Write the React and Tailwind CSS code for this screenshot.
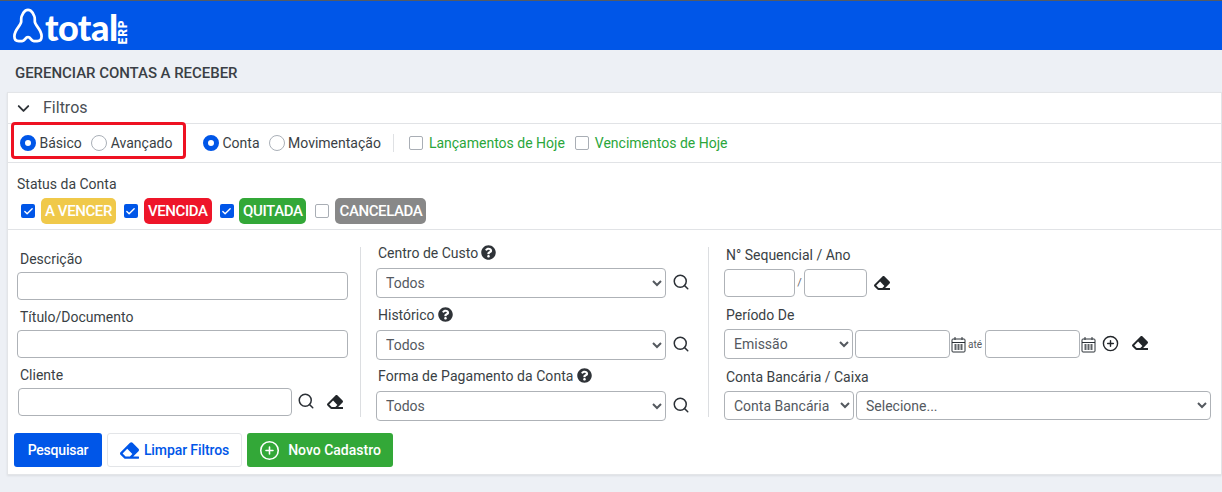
import React from "react";
import { FaEraser, FaQuestionCircle } from "react-icons/fa";
import { Search, CirclePlus, ChevronDown, Check } from "lucide-react";

const Radio = ({ on, label, className = "" }) => (
  <label className={`flex items-center gap-[3.5px] ${className}`}>
    <span className={on ? "w-[16px] h-[16px] rounded-full border-[5px] border-[#0056e8] bg-white" : "w-[16px] h-[16px] rounded-full border border-[#aab0b8] bg-white"} />
    <span className="text-[14px] text-[#3a3f45]">{label}</span>
  </label>
);

const Box = ({ on }) => on ? (
  <span className="w-[14px] h-[14px] rounded-[2px] bg-[#0056e8] flex items-center justify-center">
    <Check size={11} strokeWidth={3} className="text-white" />
  </span>
) : (
  <span className="w-[14px] h-[14px] rounded-[2px] border border-[#a9aeb5] bg-white" />
);

const Badge = ({ color, children }) => (
  <span className={`h-[26px] px-[4px] rounded-[5px] flex items-center text-white text-[15px] font-medium tracking-[-0.4px] ${color}`}>{children}</span>
);

const Label = ({ children, className = "" }) => (
  <div className={`text-[14px] leading-[18px] text-[#3a3f45] flex items-center gap-[3px] ${className}`}>{children}</div>
);

const Help = () => <FaQuestionCircle size={15} className="text-[#2f3338] -mt-[2px]" />;
const Eraser = ({ className = "" }) => <FaEraser size={16} className={`text-[#22262a] ${className}`} />;
const Find = ({ className = "" }) => <Search size={18} strokeWidth={2} className={`text-[#2b3036] -mt-[2px] ${className}`} />;

const inputCls = "h-[28px] bg-white border border-[#aeb2b7] rounded-[4px] outline-none";
const selCls = "bg-white border border-[#aeb2b7] rounded-[4px] text-[14px] text-[#54595f] outline-none pl-[5px]";

const Calendar = () => (
  <svg width="15" height="17" viewBox="0 0 15 17" className="shrink-0 text-[#2b3036]" fill="none" stroke="currentColor">
    <rect x="1" y="3" width="13" height="13" rx="1" />
    <path d="M1 6.5h13M4 1v3M11 1v3" />
    <path d="M3.5 9h2M6.5 9h2M9.5 9h2M3.5 11h2M6.5 11h2M9.5 11h2M3.5 13h2M6.5 13h2M9.5 13h2" strokeWidth="1.3" />
  </svg>
);

const Logo = () => (
  <div className="flex items-center">
    <svg width="32" height="35" viewBox="0 0 32 36" fill="none" stroke="white" strokeWidth="2.8" strokeLinejoin="round">
      <path d="M16 2C14 2 12.500 3.200 11.200 5L9.500 8.500C9 9.500 9 10.500 9 12V14C9 18 2 22 2 29C2 32.500 4 34 6.500 34H10C13 34 13 30 16 30C19 30 19 34 22 34H25.500C28 34 30 32.500 30 29C30 22 23 18 23 14V12C23 10.500 23 9.500 22.500 8.500L20.800 5C19.500 3.200 18 2 16 2Z" />
    </svg>
    <span className="text-white font-black text-[36px] leading-none tracking-[-0.5px] ml-[1px] mt-[2px] font-['Lato',sans-serif]">total</span>
    <span className="text-white font-black text-[12px] leading-none -rotate-90 w-[10px] flex justify-center mt-[12px] tracking-[0.8px]">ERP</span>
  </div>
);

export default function App() {
  return (
    <div className="w-[1222px] h-[492px] overflow-hidden bg-[#edf0f5] font-['Roboto',sans-serif] flex flex-col">
      <div className="h-[50px] shrink-0 bg-[#0056e8] border-t border-[#555b63] pl-[12px] flex items-center">
        <Logo />
      </div>
      <div className="h-[42px] shrink-0 pl-[15px] pt-[14px] text-[15px] leading-[18px] font-medium text-[#3a3f45] tracking-[-0.04px]">GERENCIAR CONTAS A RECEBER</div>

      <div className="ml-[7px] h-[383px] shrink-0 bg-white border border-[#e3e5e8] shadow-[0_1px_2px_rgba(0,0,0,0.08)] flex flex-col">
        <div className="h-[31px] shrink-0 border-b border-[#e1e3e6] pl-[6px] flex items-center gap-[10px]">
          <ChevronDown size={19} strokeWidth={2.4} className="text-[#2f3338]" />
          <span className="text-[16px] text-[#4a4f55]">Filtros</span>
        </div>

        <div className="h-[39px] shrink-0 border-b border-[#e1e3e6] pl-[12px] flex items-center">
          <div className="relative flex items-center gap-[9.5px] w-[183px]">
            <Radio on label="Básico" />
            <Radio label="Avançado" />
            <div className="absolute left-[-9px] top-[-11px] w-[175px] h-[37px] border-[3px] border-[#ee1122] rounded-[4px]" />
          </div>
          <Radio on label="Conta" />
          <Radio label="Movimentação" className="ml-[9px]" />
          <div className="w-px h-[18px] bg-[#dfe1e4] ml-[12px] mr-[15px]" />
          <label className="flex items-center gap-[6px] text-[14px] text-[#2aa63a]"><Box />Lançamentos de Hoje</label>
          <label className="flex items-center gap-[6px] text-[14px] text-[#2aa63a] ml-[10px]"><Box />Vencimentos de Hoje</label>
        </div>

        <div className="h-[67px] shrink-0 border-b border-[#e1e3e6] pl-[9px] pt-[12px]">
          <Label className="pb-[5px]">Status da Conta</Label>
          <div className="flex items-center pl-[4px]">
            <Box on /><span className="w-[6px]" /><Badge color="bg-[#f0c94a]">A VENCER</Badge>
            <span className="w-[8px]" />
            <Box on /><span className="w-[6px]" /><Badge color="bg-[#ee1529]">VENCIDA</Badge>
            <span className="w-[8px]" />
            <Box on /><span className="w-[5.500px]" /><Badge color="bg-[#33a838]">QUITADA</Badge>
            <span className="w-[9px]" />
            <Box /><span className="w-[6px]" /><Badge color="bg-[#888888]">CANCELADA</Badge>
          </div>
        </div>

        <div className="flex pt-[17px] pl-[9px] h-[203px] shrink-0">
          <div className="w-[343px] pr-[12px] shrink-0 flex flex-col">
            <Label className="pl-[3px] pt-[3px] mb-[4px]">Descrição</Label>
            <div className={`${inputCls} w-[331px]`} />
            <Label className="pl-[3px] mt-[8px] mb-[4px]">Título/Documento</Label>
            <div className={`${inputCls} w-[331px]`} />
            <Label className="pl-[3px] mt-[8px] mb-[4px]">Cliente</Label>
            <div className="flex items-center pl-[1px]">
              <div className={`${inputCls} w-[274px]`} />
              <Find className="ml-[5px]" />
              <Eraser className="ml-[12px]" />
            </div>
          </div>

          <div className="w-[348px] shrink-0 border-l border-[#dcdee1] pl-[15px] h-[170px] flex flex-col">
            <Label className="pl-[2px] mt-[-3px] mb-[6px]">Centro de Custo <Help /></Label>
            <div className="flex items-center gap-[6px]">
              <select className={`${selCls} w-[290px] h-[30px]`}><option>Todos</option></select><Find />
            </div>
            <Label className="pl-[2px] mt-[8px] mb-[6px]">Histórico <Help /></Label>
            <div className="flex items-center gap-[6px]">
              <select className={`${selCls} w-[290px] h-[30px]`}><option>Todos</option></select><Find />
            </div>
            <Label className="pl-[2px] mt-[7px] mb-[6px] tracking-[0.07px]">Forma de Pagamento da Conta <Help /></Label>
            <div className="flex items-center gap-[6px]">
              <select className={`${selCls} w-[290px] h-[30px]`}><option>Todos</option></select><Find />
            </div>
          </div>

          <div className="flex-1 border-l border-[#dcdee1] pl-[15px] h-[170px] flex flex-col">
            <Label className="pl-[2px] mt-[-1px] mb-[5px]">N° Sequencial / Ano</Label>
            <div className="flex items-center">
              <div className={`${inputCls} w-[71px]`} />
              <span className="text-[11px] text-[#666] w-[9px] text-center">/</span>
              <div className={`${inputCls} w-[63px]`} />
              <Eraser className="ml-[7px]" />
            </div>
            <Label className="pl-[2px] mt-[9px] mb-[5px]">Período De</Label>
            <div className="flex items-center">
              <select className={`${selCls} w-[129px] h-[30px]`}><option>Emissão</option></select>
              <div className={`${inputCls} w-[95px] ml-[2px]`} />
              <span className="ml-[1px]"><Calendar /></span>
              <span className="text-[10px] text-[#55595e] ml-[2px] mr-[3px]">até</span>
              <div className={`${inputCls} w-[95px]`} />
              <span className="ml-[1px]"><Calendar /></span>
              <CirclePlus size={17} strokeWidth={2} className="ml-[6px] -mt-[2px] text-[#22262a]" />
              <Eraser className="ml-[13px] -mt-[2px]" />
            </div>
            <Label className="pl-[2px] mt-[9px] mb-[5px]">Conta Bancária / Caixa</Label>
            <div className="flex items-center">
              <select className={`${selCls} w-[130px] h-[29px]`}><option>Conta Bancária</option></select>
              <select className={`${selCls} w-[355px] h-[29px] ml-[2px]`}><option>Selecione...</option></select>
            </div>
          </div>
        </div>

        <div className="flex items-center gap-[5px] pl-[6px]">
          <button className="h-[34px] w-[88px] bg-[#0056e8] rounded-[3px] text-white text-[14px] font-medium tracking-[-0.2px]">Pesquisar</button>
          <button className="h-[34px] w-[135px] bg-white border border-[#e3e5e8] rounded-[3px] text-[#0056e8] text-[14px] font-medium flex items-center justify-center gap-[5px] tracking-[-0.1px]">
            <FaEraser size={19} />Limpar Filtros
          </button>
          <button className="h-[34px] w-[146px] bg-[#33a838] rounded-[3px] text-white text-[14px] font-medium flex items-center justify-center gap-[8px]">
            <CirclePlus size={21} strokeWidth={1.8} />Novo Cadastro
          </button>
        </div>
      </div>
    </div>
  );
}
